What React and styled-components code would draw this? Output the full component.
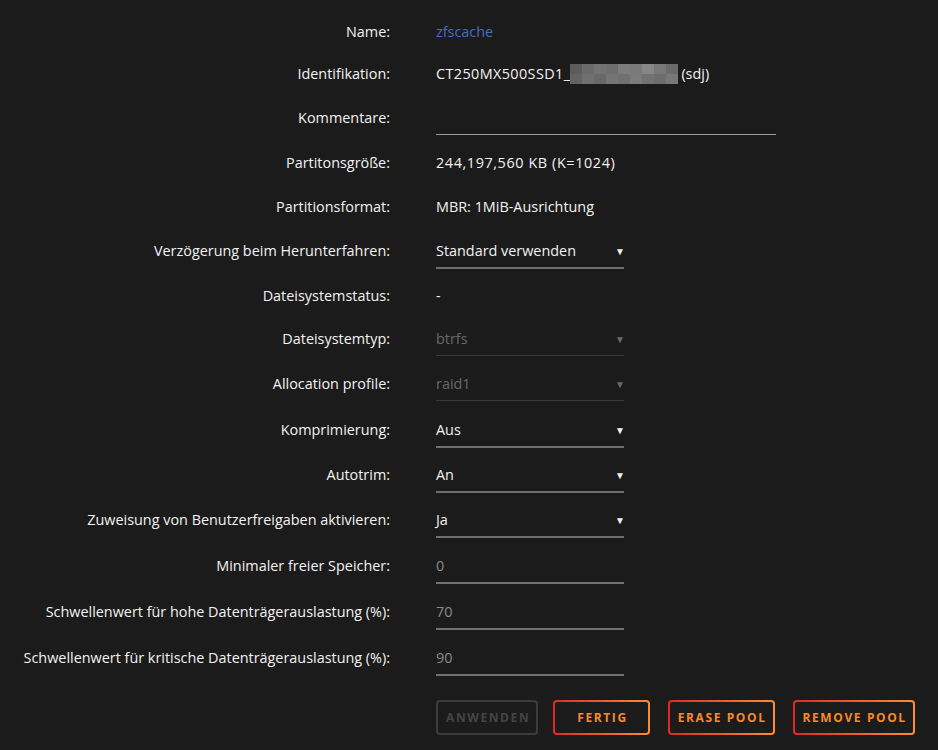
import React from "react";
import styled, { createGlobalStyle } from "styled-components";

const GlobalStyle = createGlobalStyle`
  body {
    margin: 0;
    background: #1c1b1b;
    font-family: "Open Sans", "Noto Sans", sans-serif;
    font-size: 14.4px;
    color: #f2f2f2;
  }
`;

const Page = styled("div")`
  padding-top: 22px;
  width: 938px;
  height: 750px;
  box-sizing: border-box;
  overflow: hidden;
`;

const Row = styled("div")`
  display: grid;
  grid-template-columns: 390px 1fr;
  column-gap: 46px;
  align-items: start;
  height: ${props => props.h}px;
`;

const Label = styled("div")`
  text-align: right;
  line-height: 20px;
  white-space: nowrap;
`;

const Value = styled("div")`
  line-height: 20px;
  display: flex;
  align-items: center;
  white-space: nowrap;
`;

const NameLink = styled("span")`
  color: #486dba;
`;

const Digits = styled("span")`
  letter-spacing: ${props => props.ls || 0.6}px;
`;

const Mosaic = styled("span")`
  display: inline-grid;
  grid-template-columns: repeat(9, 12px);
  grid-template-rows: 10px 10px;
  margin: 0 3px 0 0;
`;

const Tile = styled("span")`
  background: ${props => props.c};
`;

const TextInput = styled("div")`
  width: ${props => props.w}px;
  height: 20px;
  line-height: 20px;
  padding-bottom: 6px;
  border-bottom: ${props => props.line};
  color: ${props => props.color || "#f2f2f2"};
`;

const Select = styled("div")`
  width: 188px;
  height: 20px;
  line-height: 20px;
  padding-bottom: 6px;
  display: flex;
  justify-content: space-between;
  align-items: center;
  color: ${props => (props.disabled ? "#686868" : "#f2f2f2")};
  border-bottom: ${props => (props.disabled ? "1px solid #3a3a3a" : "2px solid #6e6e6e")};
`;

const Arrow = styled("span")`
  font-size: 10px;
  margin-right: -1px;
  color: ${props => (props.disabled ? "#6a6a6a" : "#f2f2f2")};
`;

const Buttons = styled("div")`
  display: flex;
  gap: 18px;
  padding-left: 436px;
  margin-top: 6px;
`;

const Button = styled("button")`
  height: 35px;
  padding: 0 ${props => props.pad - 2}px 0 ${props => props.pad}px;
  margin-right: ${props => props.mr || 0}px;
  border-radius: 4px;
  font-family: "Open Sans", "Noto Sans", sans-serif;
  font-weight: 700;
  font-size: 12px;
  letter-spacing: 1.6px;
  text-transform: uppercase;
  border: 2px solid transparent;
  background: ${props =>
    props.disabled
      ? "#1c1b1b"
      : "linear-gradient(#1c1b1b, #1c1b1b) padding-box, linear-gradient(90deg, #e22828, #ff8c2f) border-box"};
  border-color: ${props => (props.disabled ? "#3c3c3c" : "transparent")};
  color: ${props => (props.disabled ? "#444444" : "#f68a2b")};
`;

const tiles = [
  "#5c5c5c", "#6a6a6a", "#737373", "#6e6e6e", "#7d7d7d", "#7a7a7a", "#868686", "#787878", "#6b6b6b",
  "#636363", "#6f6f6f", "#686868", "#757575", "#707070", "#7b7b7b", "#727272", "#6d6d6d", "#777777",
];

const selects = [
  ["Verzögerung beim Herunterfahren:", "Standard verwenden", false, 45],
  ["Dateisystemstatus:", null, false, 43],
  ["Dateisystemtyp:", "btrfs", true, 45],
  ["Allocation profile:", "raid1", true, 46],
  ["Komprimierung:", "Aus", false, 45],
  ["Autotrim:", "An", false, 45],
  ["Zuweisung von Benutzerfreigaben aktivieren:", "Ja", false, 46],
];

const numbers = [
  ["Minimaler freier Speicher:", "0"],
  ["Schwellenwert für hohe Datenträgerauslastung (%):", "70"],
  ["Schwellenwert für kritische Datenträgerauslastung (%):", "90"],
];

const App = () => (
  <>
    <GlobalStyle />
    <Page>
      <Row h={42}>
        <Label>Name:</Label>
        <Value><NameLink>zfscache</NameLink></Value>
      </Row>
      <Row h={44}>
        <Label>Identifikation:</Label>
        <Value>
          <Digits ls={0.4}>CT250MX500SSD1_</Digits>
          <Mosaic>
            {tiles.map((c, i) => <Tile key={i} c={c} />)}
          </Mosaic>
          (sdj)
        </Value>
      </Row>
      <Row h={45}>
        <Label>Kommentare:</Label>
        <Value><TextInput w={340} line="1px solid #9a9a9a" /></Value>
      </Row>
      <Row h={44}>
        <Label>Partitonsgröße:</Label>
        <Value><Digits>244,197,560 KB (K=1024)</Digits></Value>
      </Row>
      <Row h={44}>
        <Label>Partitionsformat:</Label>
        <Value>MBR: 1MiB-Ausrichtung</Value>
      </Row>
      {selects.map(([label, value, disabled, h]) => (
        <Row h={h} key={label}>
          <Label>{label}</Label>
          <Value>
            {value === null ? "-" : (
              <Select disabled={disabled}>
                {value}
                <Arrow disabled={disabled}>▼</Arrow>
              </Select>
            )}
          </Value>
        </Row>
      ))}
      {numbers.map(([label, value]) => (
        <Row h={46} key={label}>
          <Label>{label}</Label>
          <Value><TextInput w={188} color="#8a8a8a" line="2px solid #707070">{value}</TextInput></Value>
        </Row>
      ))}
      <Buttons>
        <Button disabled pad={8} mr={-3}>Anwenden</Button>
        <Button pad={22}>Fertig</Button>
        <Button pad={8}>Erase Pool</Button>
        <Button pad={8}>Remove Pool</Button>
      </Buttons>
    </Page>
  </>
);

export default App;
